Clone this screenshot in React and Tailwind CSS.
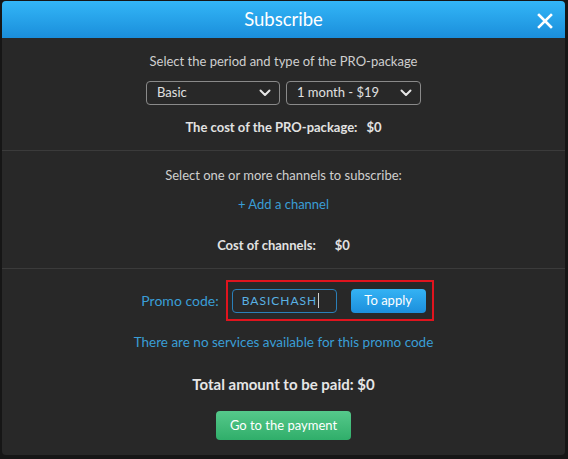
import React from 'react';

function Chevron() {
  return (
    <svg width="14" height="14" viewBox="0 0 14 14" fill="none">
      <path d="M2.5 4.5 L7 9 L11.5 4.5" stroke="#e6e6e6" strokeWidth="2" strokeLinecap="round" strokeLinejoin="round" />
    </svg>
  );
}

function Select({ label, width }) {
  return (
    <div className={`flex h-[24px] items-center justify-between rounded-[4px] border border-[#8a8a8a] pl-[10px] pr-[7px] text-[13px] text-[#e0e0e0] ${width}`}>
      <span>{label}</span>
      <Chevron />
    </div>
  );
}

export default function App() {
  return (
    <div className="h-[459px] w-[568px] bg-[#161616] pl-[2px] pr-[3px] pt-[1px]" style={{ fontFamily: 'Lato, "Noto Sans", sans-serif' }}>
      <div className="flex h-[454px] flex-col overflow-hidden rounded-[4px] bg-[#282828]">
        <header className="relative flex h-[37px] shrink-0 items-center justify-center bg-gradient-to-b from-[#33b6f7] to-[#1a8edb]">
          <h1 className="text-[18.5px] text-white">Subscribe</h1>
          <svg className="absolute right-[12px] top-[12px]" width="16" height="16" viewBox="0 0 16 16">
            <path d="M2 2 L14 14 M14 2 L2 14" stroke="white" strokeWidth="2.6" strokeLinecap="square" />
          </svg>
        </header>

        <section className="flex h-[113px] shrink-0 flex-col items-center border-b border-[#3b3b3b] pt-[14px]">
          <p className="text-[13px] text-[#cfcfcf]">Select the period and type of the PRO-package</p>
          <div className="mt-[9px] flex gap-[6px]">
            <Select label="Basic" width="w-[134px]" />
            <Select label="1 month - $19" width="w-[135px]" />
          </div>
          <p className="mt-[13px] text-[13px] font-bold text-[#e2e2e2]">
            The cost of the PRO-package:<span className="ml-[9px]">$0</span>
          </p>
        </section>

        <section className="flex h-[118px] shrink-0 flex-col items-center border-b border-[#3b3b3b] pt-[15px]">
          <p className="text-[13px] text-[#cfcfcf]">Select one or more channels to subscribe:</p>
          <p className="mt-[9px] text-[13px] text-[#3a9ed6]">+ Add a channel</p>
          <p className="mt-[22px] text-[13px] font-bold text-[#e2e2e2]">
            Cost of channels:<span className="ml-[19px]">$0</span>
          </p>
        </section>

        <section className="flex flex-1 flex-col items-center pt-[11px]">
          <div className="ml-[8px] flex items-center">
            <span className="mr-[7px] text-[14px] text-[#3a9ed6]">Promo code:</span>
            <div className="flex h-[41px] items-center gap-[14px] border-[2px] border-[#e0141e] pl-[4px] pr-[6px]">
              <div className="flex h-[24px] w-[105px] items-center rounded-[4px] border border-[#2a7fb8] pl-[9px] text-[12px] tracking-[1px] text-[#5ab2e4]">
                BASICHASH<span className="ml-[1px] h-[15px] w-[1px] bg-[#d0d0d0]"></span>
              </div>
              <button className="flex h-[24px] w-[75px] items-center justify-center rounded-[4px] bg-gradient-to-b from-[#34b3f4] to-[#1c8fdc] text-[13px] text-white">
                To apply
              </button>
            </div>
          </div>
          <p className="mt-[11px] text-[13.5px] text-[#3a9ed6]">There are no services available for this promo code</p>
          <p className="mt-[21px] text-[15px] font-bold text-[#e6e6e6]">Total amount to be paid: $0</p>
          <button className="mt-[15px] flex h-[29px] w-[135px] items-center justify-center rounded-[4px] bg-gradient-to-b from-[#55c98b] to-[#2fae6a] text-[13px] text-white">
            Go to the payment
          </button>
        </section>
      </div>
    </div>
  );
}
